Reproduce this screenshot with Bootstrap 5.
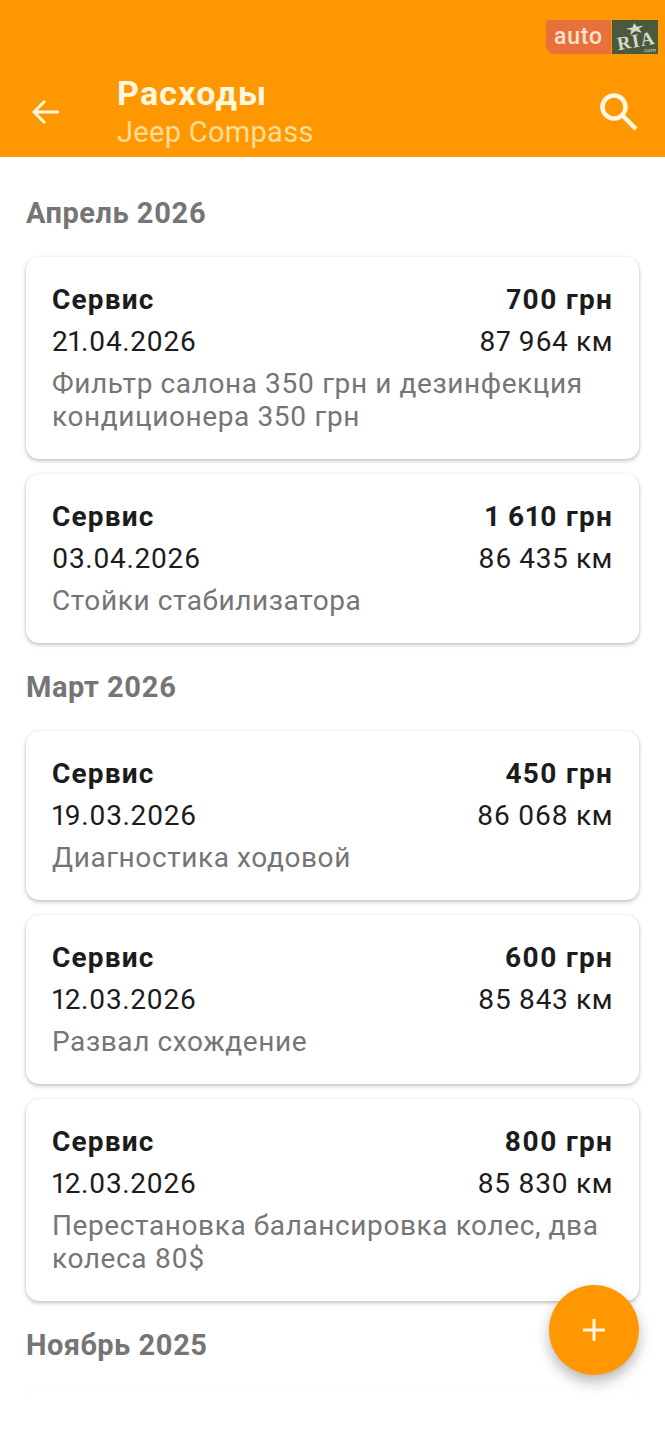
<!DOCTYPE html>
<html lang="ru">

<head>
    <meta charset="UTF-8">
    <meta name="viewport" content="width=device-width, initial-scale=1.0">
    <title>Расходы</title>
    <link href="https://cdn.jsdelivr.net/npm/bootstrap@5.3.0/dist/css/bootstrap.min.css" rel="stylesheet">
    <style>
        body { font-family: Roboto, "Liberation Sans", sans-serif; font-variant-numeric: proportional-nums; background: #fff; height: 1440px; overflow: hidden; }
        .app-bar { height: 157px; background: #ff9800; padding: 74px 26px 7px 32px; }
        .bar-titles { margin-left: 57px; }
        .bar-title { font-size: 34px; line-height: 40px; font-weight: 700; color: #fff6e0; letter-spacing: 1.2px; }
        .bar-sub { font-size: 29px; line-height: 38px; color: #ffdc9a; letter-spacing: .3px; }
        .ria-logo { position: absolute; top: 20px; left: 546px; height: 34px; }
        .ria-auto { width: 65px; background: #e8703a; color: #ffe3cc; font-size: 23px; font-weight: 500; line-height: 33px; border-bottom-left-radius: 9px; border-top-left-radius: 3px; letter-spacing: .8px; }
        .ria-box { width: 46px; margin-left: 1px; background: #4a5a3c; color: #d5d8cc; overflow: hidden; }
        .ria-word { position: absolute; left: 5px; top: 12px; font: 700 19px/18px "Liberation Serif", serif; transform: rotate(-10deg); letter-spacing: 1.2px; }
        .ria-com { position: absolute; right: 2px; bottom: 0; font-size: 6px; line-height: 8px; }
        .ria-star { position: absolute; left: 14px; top: 3px; transform: rotate(-10deg); }
        .list-clip { height: 1243px; overflow: hidden; padding: 0 26px; }
        .month-head { font-size: 29px; font-weight: 700; color: #757575; line-height: 34px; margin: 39px 0 27px; letter-spacing: .5px; }
        .list-clip > .month-head:not(:first-child) { margin-top: 27px; }
        .cost-card { background: #fff; border-radius: 13px; box-shadow: 0 2px 4px rgba(0,0,0,.24), 0 0 3px rgba(0,0,0,.06); padding: 22px 26px 26px; margin-bottom: 15px; }
        .cost-faded { height: 60px; box-shadow: 0 0 3px rgba(0,0,0,.05); }
        .cost-row { font-size: 28px; line-height: 42px; color: #1c1c1c; letter-spacing: .6px; }
        .cost-strong { font-weight: 700; letter-spacing: 1.2px; }
        .cost-note { font-size: 28px; line-height: 33px; color: #757575; margin-top: 4px; letter-spacing: .6px; }
        .add-fab { position: absolute; left: 549px; top: 1285px; width: 90px; height: 90px; border-radius: 50%; background: #ff9800; box-shadow: 0 7px 14px rgba(0,0,0,.28); }
    </style>
</head>

<body>

    <div class="app-bar d-flex align-items-center">
        <svg width="28" height="28" viewBox="0 0 28 28" fill="none" stroke="#fff6e0" stroke-width="3">
            <path d="M27 14H2M13 3 2 14l11 11" />
        </svg>
        <div class="bar-titles flex-grow-1">
            <div class="bar-title">Расходы</div>
            <div class="bar-sub">Jeep Compass</div>
        </div>
        <svg width="40" height="40" viewBox="0 0 40 40" fill="none" stroke="#fff6e0" stroke-width="4.5">
            <circle cx="15" cy="15" r="11.5" />
            <path d="M23.5 23.5 37 37" />
        </svg>
    </div>

    <div class="ria-logo d-flex">
        <div class="ria-auto text-center">auto</div>
        <div class="ria-box position-relative">
            <svg class="ria-star" width="18" height="11" viewBox="0 0 24 22" preserveAspectRatio="none" fill="#d5d8cc">
                <polygon points="12,0 15,8 24,8 17,13 20,22 12,16 4,22 7,13 0,8 9,8" />
            </svg>
            <span class="ria-word">RIA</span>
            <span class="ria-com">.com</span>
        </div>
    </div>

    <div class="list-clip">
        <div class="month-head">Апрель 2026</div>

        <div class="cost-card">
            <div class="cost-row cost-strong d-flex justify-content-between"><span>Сервис</span><span>700 грн</span></div>
            <div class="cost-row d-flex justify-content-between"><span>21.04.2026</span><span>87 964 км</span></div>
            <div class="cost-note">Фильтр салона 350 грн и дезинфекция кондиционера 350 грн</div>
        </div>
        <div class="cost-card">
            <div class="cost-row cost-strong d-flex justify-content-between"><span>Сервис</span><span>1 610 грн</span></div>
            <div class="cost-row d-flex justify-content-between"><span>03.04.2026</span><span>86 435 км</span></div>
            <div class="cost-note">Стойки стабилизатора</div>
        </div>

        <div class="month-head">Март 2026</div>

        <div class="cost-card">
            <div class="cost-row cost-strong d-flex justify-content-between"><span>Сервис</span><span>450 грн</span></div>
            <div class="cost-row d-flex justify-content-between"><span>19.03.2026</span><span>86 068 км</span></div>
            <div class="cost-note">Диагностика ходовой</div>
        </div>
        <div class="cost-card">
            <div class="cost-row cost-strong d-flex justify-content-between"><span>Сервис</span><span>600 грн</span></div>
            <div class="cost-row d-flex justify-content-between"><span>12.03.2026</span><span>85 843 км</span></div>
            <div class="cost-note">Развал схождение</div>
        </div>
        <div class="cost-card">
            <div class="cost-row cost-strong d-flex justify-content-between"><span>Сервис</span><span>800 грн</span></div>
            <div class="cost-row d-flex justify-content-between"><span>12.03.2026</span><span>85 830 км</span></div>
            <div class="cost-note">Перестановка балансировка колес, два колеса 80$</div>
        </div>

        <div class="month-head">Ноябрь 2025</div>

        <div class="cost-card cost-faded"></div>
    </div>

    <div class="add-fab d-flex align-items-center justify-content-center">
        <svg width="24" height="24" viewBox="0 0 24 24" fill="none" stroke="#fff6e0" stroke-width="3">
            <path d="M12 1v22M1 12h22" />
        </svg>
    </div>

    <script src="https://cdn.jsdelivr.net/npm/bootstrap@5.3.0/dist/js/bootstrap.bundle.min.js"></script>

</body>

</html>
